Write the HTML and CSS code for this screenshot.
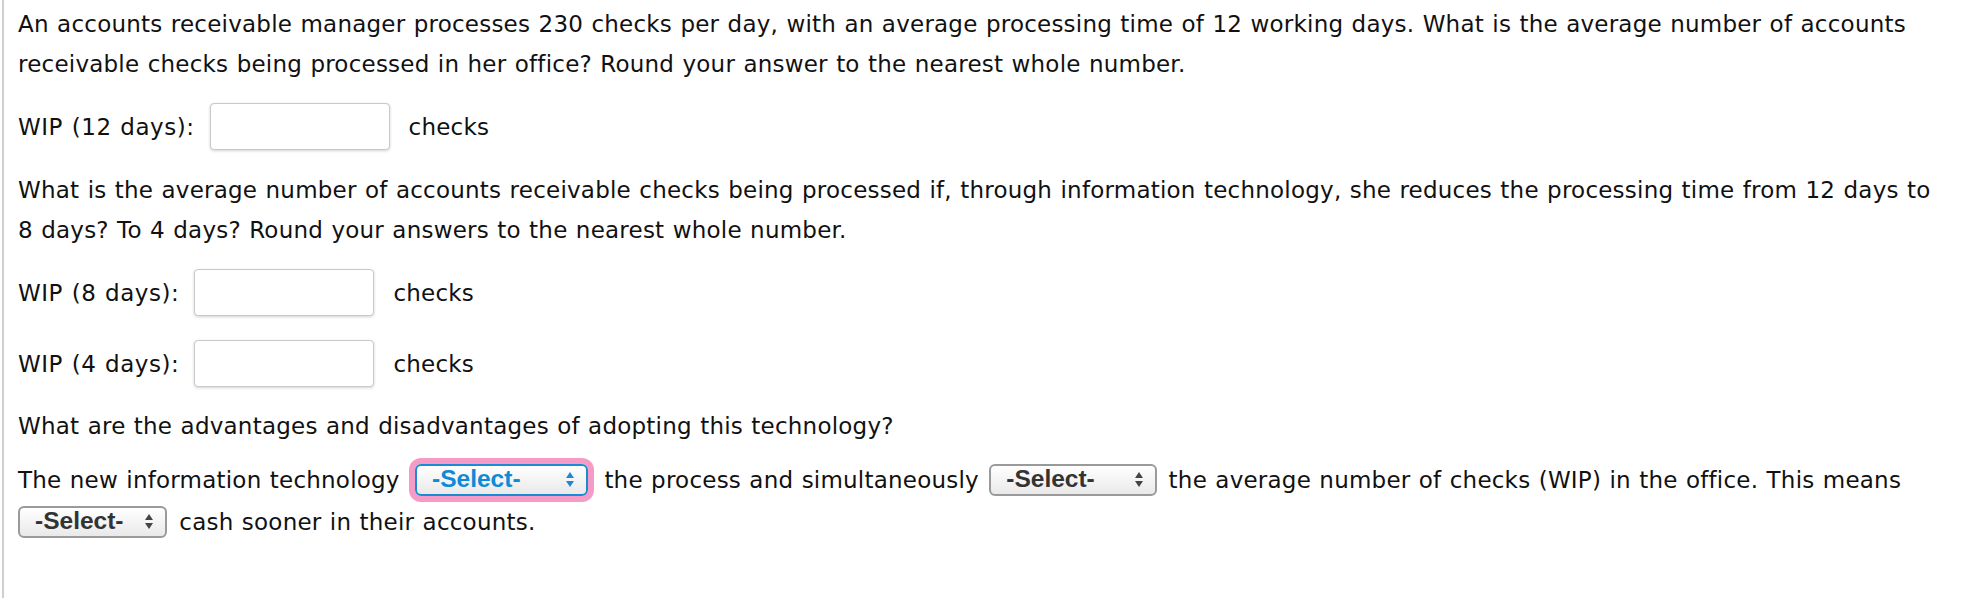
FILE: index.html
```html
<!DOCTYPE html>
<html lang="en">
<head>
<meta charset="utf-8">
<title>Question</title>
<link rel="stylesheet" href="styles.css">
</head>
<body>
<div class="question">
  <p class="para">An accounts receivable manager processes 230 checks per day, with an average processing time of 12 working days. What is the average number of accounts receivable checks being processed in her office? Round your answer to the nearest whole number.</p>
  <div class="wip-row row-12">
    <span class="wip-label">WIP (12 days):</span>
    <input class="num-input" type="text" aria-label="WIP 12 days">
    <span class="unit">checks</span>
  </div>
  <p class="para para-2">What is the average number of accounts receivable checks being processed if, through information technology, she reduces the processing time from 12 days to 8 days? To 4 days? Round your answers to the nearest whole number.</p>
  <div class="wip-row row-8">
    <span class="wip-label">WIP (8 days):</span>
    <input class="num-input" type="text" aria-label="WIP 8 days">
    <span class="unit">checks</span>
  </div>
  <div class="wip-row row-4">
    <span class="wip-label">WIP (4 days):</span>
    <input class="num-input" type="text" aria-label="WIP 4 days">
    <span class="unit">checks</span>
  </div>
  <p class="para para-3">What are the advantages and disadvantages of adopting this technology?</p>
  <p class="fill">The new information technology <span class="sel sel-focus"><span class="sel-text">-Select-</span><svg class="arrows" viewBox="0 0 8 15" width="8" height="15"><path d="M4 0 L8 6 L0 6 Z"/><path d="M0 9 L8 9 L4 15 Z"/></svg></span> the process and simultaneously <span class="sel sel-wide"><span class="sel-text">-Select-</span><svg class="arrows" viewBox="0 0 8 15" width="8" height="15"><path d="M4 0 L8 6 L0 6 Z"/><path d="M0 9 L8 9 L4 15 Z"/></svg></span> the average number of checks (WIP) in the office. This means <span class="sel sel-narrow"><span class="sel-text">-Select-</span><svg class="arrows" viewBox="0 0 8 15" width="8" height="15"><path d="M4 0 L8 6 L0 6 Z"/><path d="M0 9 L8 9 L4 15 Z"/></svg></span> cash sooner in their accounts.</p>
</div>
</body>
</html>
```
FILE: styles.css
```css
html, body {
  margin: 0;
  padding: 0;
  background: #ffffff;
}

body {
  font-family: "DejaVu Sans", Verdana, sans-serif;
  font-size: 23px;
  letter-spacing: 0.22px;
  word-spacing: 0.8px;
  color: #111111;
}

.question {
  border-left: 2px solid #cfcfcf;
  margin-left: 2px;
  padding: 4px 25px 60px 14px;
  min-height: 534px;
}

.para {
  margin: 0;
  line-height: 40px;
}

.wip-row {
  display: flex;
  align-items: center;
  height: 47px;
  margin-top: 19px;
}

.wip-label {
  letter-spacing: 0.55px;
  margin-right: 15px;
}

.num-input {
  box-sizing: border-box;
  width: 180px;
  height: 47px;
  border: 1px solid #c9c9c9;
  border-radius: 4px;
  box-shadow: 0 1px 3px rgba(0, 0, 0, 0.18);
  background: #ffffff;
  margin: 0 19px 0 0;
  padding: 0 8px;
  font: inherit;
}

.para-2 {
  margin-top: 20px;
}

.row-8 {
  margin-top: 19px;
}

.row-4 {
  margin-top: 24px;
}

.para-3 {
  margin-top: 19px;
}

.fill {
  margin: 13px 0 0;
  line-height: 42px;
}

.sel {
  display: inline-flex;
  align-items: center;
  justify-content: space-between;
  box-sizing: border-box;
  height: 32px;
  vertical-align: middle;
  position: relative;
  top: -2px;
  border: 2px solid #9a9a9a;
  border-radius: 6px;
  background: linear-gradient(#ffffff, #e9e9e9);
  padding: 0 12px 0 15px;
  font-family: "Liberation Sans", Arial, sans-serif;
  font-weight: bold;
  font-size: 24.5px;
  letter-spacing: 0;
  word-spacing: 0;
  color: #333333;
  line-height: 1;
}

.arrows {
  fill: #444444;
  flex: none;
}

.sel-wide {
  width: 168px;
  margin: 0 3px 0 2px;
}

.sel-narrow {
  width: 149px;
  margin-right: 4px;
}

.sel-focus {
  width: 173px;
  border-color: #1a8ad2;
  color: #0e8ad6;
  box-shadow: 0 0 0 6px #f59cc6;
  margin: 0 8px 0 7px;
}

.sel-focus .arrows {
  fill: #1a8ad2;
}
```
